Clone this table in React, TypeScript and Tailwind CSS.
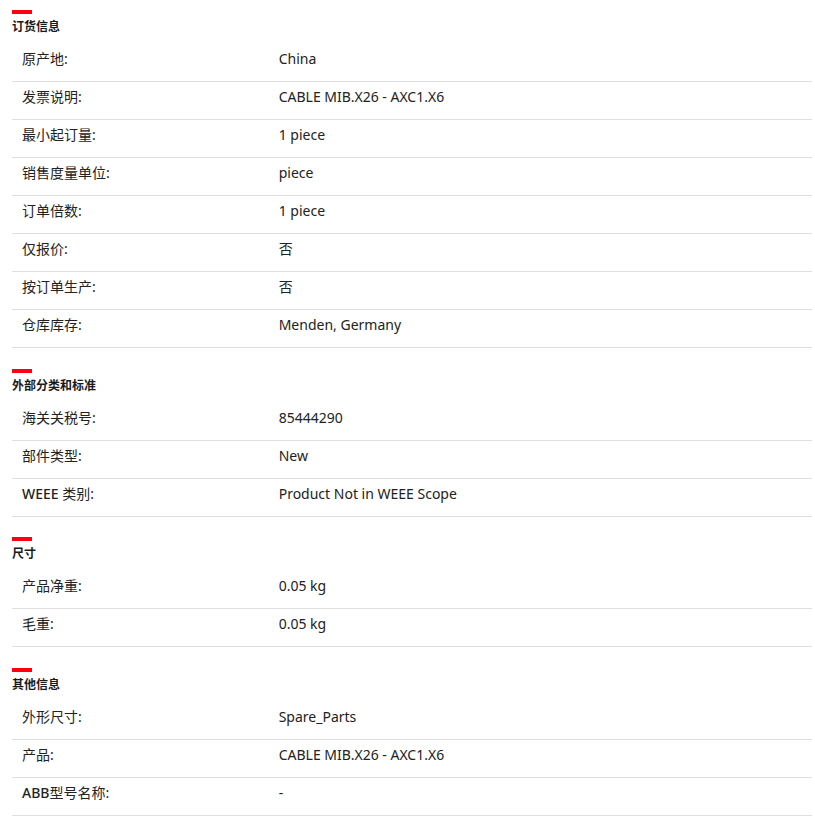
import type { ReactNode } from "react"

type Row = [ReactNode, string]

const sections: { title: string; rows: Row[] }[] = [
  {
    title: "订货信息",
    rows: [
      ["原产地:", "China"],
      ["发票说明:", "CABLE MIB.X26 - AXC1.X6"],
      ["最小起订量:", "1 piece"],
      ["销售度量单位:", "piece"],
      ["订单倍数:", "1 piece"],
      ["仅报价:", "否"],
      ["按订单生产:", "否"],
      ["仓库库存:", "Menden, Germany"],
    ],
  },
  {
    title: "外部分类和标准",
    rows: [
      ["海关关税号:", "85444290"],
      ["部件类型:", "New"],
      [<><span className="font-medium">WEEE</span> 类别:</>, "Product Not in WEEE Scope"],
    ],
  },
  {
    title: "尺寸",
    rows: [
      ["产品净重:", "0.05 kg"],
      ["毛重:", "0.05 kg"],
    ],
  },
  {
    title: "其他信息",
    rows: [
      ["外形尺寸:", "Spare_Parts"],
      ["产品:", "CABLE MIB.X26 - AXC1.X6"],
      [<><span className="font-medium">ABB</span>型号名称:</>, "-"],
    ],
  },
]

const App = () => {
  return (
    <div
      className="bg-white pl-3 pr-[3px] pt-[10px] pb-4 text-[#222222]"
      style={{ fontFamily: '"Noto Sans", "Noto Sans CJK SC", sans-serif' }}
    >
      {sections.map((s, i) => (
        <div key={s.title} className={i > 0 ? "mt-[20.5px]" : ""}>
          <div className="w-5 h-1 bg-[#ff000f]" />
          <h2 className="mt-[3px] text-[12px] leading-5 font-bold text-[#1a1a1a]">{s.title}</h2>
          <div className="mt-[7px]">
            {s.rows.map(([label, value], j) => (
              <div
                key={j}
                className="grid grid-cols-[1fr_2fr] border-b border-[#dedede] pt-[5px] pb-[12px] text-[14px] leading-5"
              >
                <div className="pl-[10px]">{label}</div>
                <div>{value}</div>
              </div>
            ))}
          </div>
        </div>
      ))}
    </div>
  )
}

export default App
